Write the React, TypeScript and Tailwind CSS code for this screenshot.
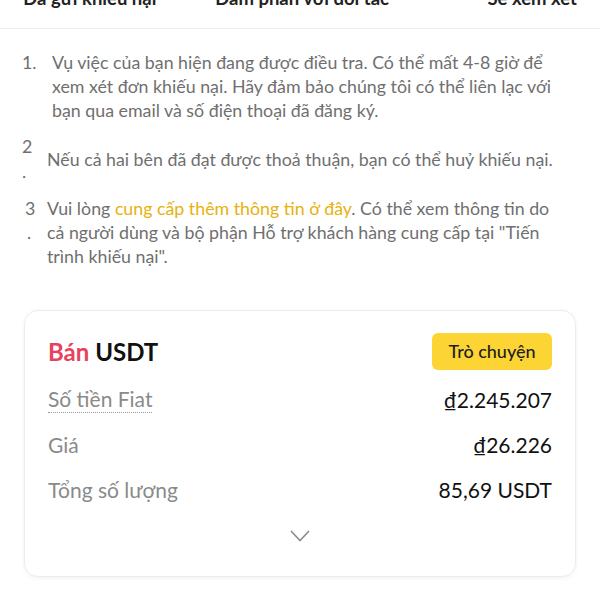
const font = { fontFamily: "Lato, 'Noto Sans', sans-serif" };

function Row({ label, value, dotted }: { label: string; value: string; dotted?: boolean }) {
    return (
        <div className="flex items-center justify-between h-[45px]">
            <span
                className={
                    "text-[21px] text-[#8a8a8a] " +
                    (dotted ? "border-b border-dotted border-[#9a9a9a] leading-[26px]" : "")
                }
            >
                {label}
            </span>
            <span className="text-[21px] text-[#111]">{value}</span>
        </div>
    );
}

export default function App() {
    return (
        <div className="w-[600px] h-[600px] bg-white overflow-hidden" style={font}>
            {/* tabs, bị cắt ở trên */}
            <div className="h-[29px] border-b border-[#eeeeee] overflow-hidden">
                <div className="flex px-[23px] -mt-[15px] text-[18.5px] font-bold text-[#222] whitespace-nowrap">
                    <span className="w-[192px]">Đã gửi khiếu nại</span>
                    <span>Đàm phán với đối tác</span>
                    <span className="ml-auto">Sẽ xem xét</span>
                </div>
            </div>

            {/* danh sách hướng dẫn */}
            <div className="px-[22px] pt-[21px] text-[17.8px] leading-[24px] text-[#6f6f6f] whitespace-nowrap">
                <div className="flex">
                    <span className="w-[30px] shrink-0">1.</span>
                    <p>
                        Vụ việc của bạn hiện đang được điều tra. Có thể mất 4-8 giờ để
                        <br />
                        xem xét đơn khiếu nại. Hãy đảm bảo chúng tôi có thể liên lạc với
                        <br />
                        bạn qua email và số điện thoại đã đăng ký.
                    </p>
                </div>
                <div className="flex items-center mt-[12px]">
                    <span className="w-[25px] shrink-0 flex flex-col leading-[25px]">
                        <span>2</span>
                        <span>.</span>
                    </span>
                    <p>Nếu cả hai bên đã đạt được thoả thuận, bạn có thể huỷ khiếu nại.</p>
                </div>
                <div className="flex mt-[12px]">
                    <span className="w-[25px] shrink-0 flex flex-col pl-[3px]">
                        <span>3</span>
                        <span className="pl-[2px]">.</span>
                    </span>
                    <p>
                        Vui lòng <span className="text-[#e8b10c]">cung cấp thêm thông tin ở đây</span>. Có thể
                        xem thông tin do
                        <br />
                        cả người dùng và bộ phận Hỗ trợ khách hàng cung cấp tại "Tiến
                        <br />
                        trình khiếu nại".
                    </p>
                </div>
            </div>

            {/* thẻ lệnh */}
            <div className="mx-[24px] mt-[42px] rounded-[14px] border border-[#ececec] shadow-[0_1px_4px_rgba(0,0,0,0.06)] px-[23px] pt-[22px] pb-[34px]">
                <div className="flex items-center justify-between h-[37px]">
                    <div className="text-[24px] font-bold">
                        <span className="text-[#e8425e]">Bán</span> <span className="text-[#111]">USDT</span>
                    </div>
                    <button className="bg-[#fcd535] rounded-[6px] h-[37px] w-[120px] text-[18px] font-medium text-[#1e1e1e]">
                        Trò chuyện
                    </button>
                </div>
                <div className="mt-[7px]">
                    <Row label="Số tiền Fiat" value="₫2.245.207" dotted />
                    <Row label="Giá" value="₫26.226" />
                    <Row label="Tổng số lượng" value="85,69 USDT" />
                </div>
                <div className="flex justify-center mt-[18px]">
                    <svg width="20" height="12" viewBox="0 0 20 12" fill="none">
                        <polyline points="1,1 10,10.5 19,1" stroke="#8c8c8c" strokeWidth="1.6" />
                    </svg>
                </div>
            </div>
        </div>
    );
}
